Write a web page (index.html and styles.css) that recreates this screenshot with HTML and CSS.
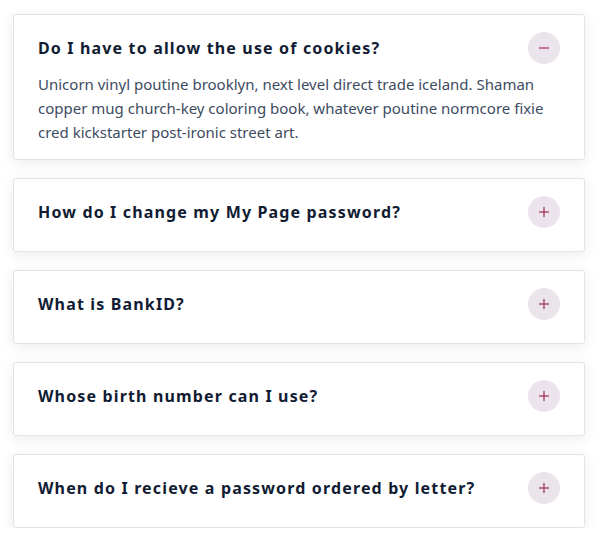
FILE: index.html
```html
<!DOCTYPE html>
<html lang="en">
<head>
<meta charset="utf-8">
<title>FAQ</title>
<link rel="stylesheet" href="styles.css">
</head>
<body>
<div class="faq">
  <div class="card open">
    <div class="head">
      <h3 class="q">Do I have to allow the use of cookies?</h3>
      <span class="toggle"><svg width="12" height="12" viewBox="0 0 12 12"><line x1="1" y1="6" x2="11" y2="6"/></svg></span>
    </div>
    <p class="a">Unicorn vinyl poutine brooklyn, next level direct trade iceland. Shaman copper mug church-key coloring book, whatever poutine normcore fixie cred kickstarter post-ironic street art.</p>
  </div>
  <div class="card">
    <div class="head">
      <h3 class="q">How do I change my My Page password?</h3>
      <span class="toggle"><svg width="12" height="12" viewBox="0 0 12 12"><line x1="1" y1="6" x2="11" y2="6"/><line x1="6" y1="1" x2="6" y2="11"/></svg></span>
    </div>
  </div>
  <div class="card">
    <div class="head">
      <h3 class="q">What is BankID?</h3>
      <span class="toggle"><svg width="12" height="12" viewBox="0 0 12 12"><line x1="1" y1="6" x2="11" y2="6"/><line x1="6" y1="1" x2="6" y2="11"/></svg></span>
    </div>
  </div>
  <div class="card">
    <div class="head">
      <h3 class="q">Whose birth number can I use?</h3>
      <span class="toggle"><svg width="12" height="12" viewBox="0 0 12 12"><line x1="1" y1="6" x2="11" y2="6"/><line x1="6" y1="1" x2="6" y2="11"/></svg></span>
    </div>
  </div>
  <div class="card">
    <div class="head">
      <h3 class="q">When do I recieve a password ordered by letter?</h3>
      <span class="toggle"><svg width="12" height="12" viewBox="0 0 12 12"><line x1="1" y1="6" x2="11" y2="6"/><line x1="6" y1="1" x2="6" y2="11"/></svg></span>
    </div>
  </div>
</div>
</body>
</html>
```
FILE: styles.css
```css
html, body {
  margin: 0;
  padding: 0;
  background: #ffffff;
}
body {
  font-family: "Noto Sans", "Open Sans", sans-serif;
  padding: 14px 14px 0 13px;
}
.faq {
  display: flex;
  flex-direction: column;
  gap: 18px;
}
.card {
  background: #fff;
  border: 1px solid #e8e0e8;
  border-radius: 3px;
  box-shadow: 0 3px 14px rgba(60, 40, 70, 0.09);
  padding: 17px 24px 23px 24px;
}
.card.open {
  padding-bottom: 15px;
}
.head {
  display: flex;
  align-items: center;
  justify-content: space-between;
  height: 32px;
}
.q {
  margin: 0;
  font-size: 16px;
  font-weight: 700;
  letter-spacing: 1.15px;
  color: #111c33;
  line-height: 20px;
}
.toggle {
  width: 32px;
  height: 32px;
  border-radius: 50%;
  background: #ece4ec;
  display: flex;
  align-items: center;
  justify-content: center;
  flex: none;
}
.toggle svg line {
  stroke: #a8375f;
  stroke-width: 1.3;
}
.a {
  margin: 8px 0 0 0;
  font-size: 15px;
  line-height: 24px;
  color: #3d4b5f;
}
```
